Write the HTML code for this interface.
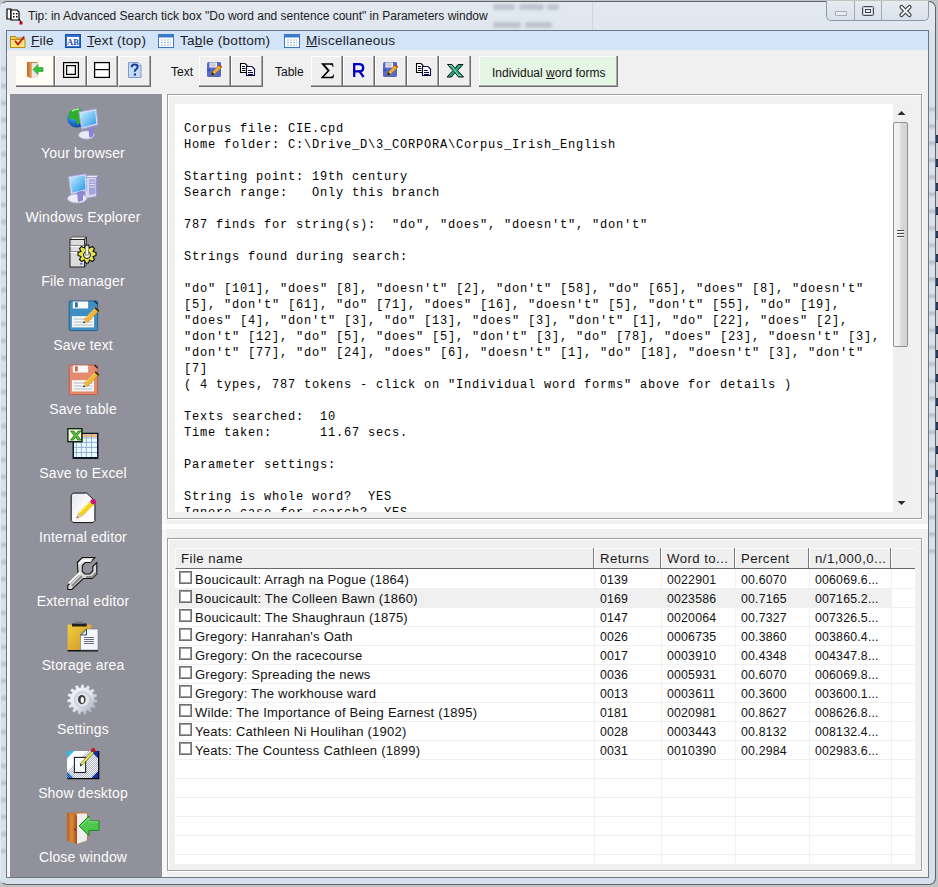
<!DOCTYPE html><html><head><meta charset="utf-8"><style>
*{margin:0;padding:0;box-sizing:border-box}
html,body{width:938px;height:887px;overflow:hidden}
body{position:relative;background:#c4c4c4;font-family:"Liberation Sans",sans-serif;font-size:12px;color:#000}
.a{position:absolute}
.frame{left:0;top:1px;width:936px;height:884px;border:1px solid #5d6570;border-left-color:#e4eaf2;border-radius:7px;
 background:linear-gradient(180deg,#e2e9f1 0px,#dfe6ee 29px,#d9e2ec 30px,#d8e1eb 100%)}
.client{left:6px;top:30px;width:923px;height:848px;border:1px solid #6f7780;background:#f0f0f0}
.menubar{left:7px;top:31px;width:921px;height:19px;background:#d3e4f9}
.mi{top:33px;font-size:13.6px;letter-spacing:0.25px;color:#1e1e1e;white-space:nowrap;line-height:16px}
.btn{top:56px;height:31px;background:#f0eeee;box-shadow:inset -1px -1px 0 #6b6b6b, inset -2px -2px 0 #a8a8a8, inset 1px 1px 0 #fff}
.tlab{top:64px;font-size:12px;color:#111;line-height:16px}
.side{left:10px;top:94px;width:152px;height:783px;background:#91919b}
.sl{left:9px;width:148px;text-align:center;color:#fcfcfc;font-size:14px;letter-spacing:0.15px;white-space:nowrap;line-height:16px}
.panel{border:1px solid #a0a0a0;box-shadow:inset 1px 1px 0 #fff, 1px 1px 0 #fff}
.txt{left:175px;top:104px;width:718px;height:408px;background:#fff;overflow:hidden}
.mono{font-family:"Liberation Mono",monospace;font-size:12px;letter-spacing:0.8px;line-height:16px;white-space:pre;color:#000;position:absolute;left:9px;top:17.4px}
.ht{top:550.5px;font-size:13.2px;letter-spacing:0.45px;color:#1a1a1a;white-space:nowrap;line-height:16px}
.cell{font-size:12.3px;letter-spacing:0.2px;white-space:nowrap;color:#111;line-height:16px}
svg{position:absolute;overflow:visible}
</style></head><body>
<div class="a frame"></div>
<div class="a" style="left:936px;top:120px;width:2px;height:375px;background:repeating-linear-gradient(180deg,#d6d2d4 0 15.9px,#1c2c40 15.9px 16.9px,#24405c 16.9px 22.9px,#101a28 22.9px 23.9px);background-position:0 -1px"></div>
<div class="a" style="left:929px;top:100px;width:6px;height:460px;background:repeating-linear-gradient(180deg,rgba(120,128,140,0) 0 6px,rgba(120,128,140,.35) 9px,rgba(120,128,140,0) 13px 17px)"></div>
<svg style="left:6px;top:8px" width="18" height="17" viewBox="0 0 18 17">
<path d="M1 1h4v10H1z" fill="#fff" stroke="#000" stroke-width="1.2"/>
<path d="M5 2h6l2 2v8H5z" fill="#fff" stroke="#000" stroke-width="1.2"/>
<rect x="7" y="5" width="1.5" height="1.5" fill="#000"/><rect x="10" y="5" width="1.5" height="1.5" fill="#000"/>
<rect x="7" y="8" width="1.5" height="1.5" fill="#000"/><rect x="10" y="8" width="1.5" height="1.5" fill="#000"/>
<path d="M13 11l2 3" stroke="#000" stroke-width="1.2"/><rect x="13.5" y="13.5" width="3" height="3" fill="#d00010"/>
</svg>
<div class="a" style="left:28px;top:9px;font-size:12px;color:#1b1b1b;white-space:nowrap;line-height:14px">Tip: in Advanced Search tick box "Do word and sentence count" in Parameters window</div>
<div class="a" style="left:493px;top:4px;width:22px;height:6px;background:#9aa2ac;filter:blur(1.8px);opacity:.5;border-radius:2px"></div>
<div class="a" style="left:519px;top:4px;width:25px;height:6px;background:#9aa2ac;filter:blur(1.8px);opacity:.5;border-radius:2px"></div>
<div class="a" style="left:547px;top:4px;width:12px;height:6px;background:#9aa2ac;filter:blur(1.8px);opacity:.5;border-radius:2px"></div>
<div class="a" style="left:493px;top:22px;width:28px;height:6px;background:#9aa2ac;filter:blur(1.8px);opacity:.5;border-radius:2px"></div>
<div class="a" style="left:525px;top:22px;width:27px;height:6px;background:#9aa2ac;filter:blur(1.8px);opacity:.5;border-radius:2px"></div>
<div class="a" style="left:592px;top:2px;width:1px;height:28px;background:#c4cad2;opacity:.6"></div>
<div class="a" style="left:826px;top:1px;width:103px;height:20px;border:1px solid #8f99a6;border-top:none;border-radius:0 0 5px 5px;background:linear-gradient(180deg,#e6ebf1,#d9e1ea)"></div>
<div class="a" style="left:854px;top:1px;width:1px;height:19px;background:#a2abb6"></div>
<div class="a" style="left:881px;top:1px;width:1px;height:19px;background:#a2abb6"></div>
<div class="a" style="left:835px;top:11px;width:12px;height:5px;border:1px solid #a6adb6;background:#e9edf2;border-radius:1px"></div>
<div class="a" style="left:862px;top:6px;width:12px;height:10px;border:1.5px solid #454a52;border-radius:1.5px;background:#eef1f5;box-shadow:inset 0 0 0 1px #c8ccd2"></div>
<div class="a" style="left:865px;top:9px;width:6px;height:4px;border:1px solid #3a3f46;background:#f4f6f8"></div>
<svg style="left:899px;top:5px" width="13" height="12" viewBox="0 0 13 12"><path d="M2.5 2L10.5 10M10.5 2L2.5 10" stroke="#3b4048" stroke-width="4.2" stroke-linecap="round"/><path d="M2.5 2L10.5 10M10.5 2L2.5 10" stroke="#f6f7f9" stroke-width="1.8" stroke-linecap="round"/></svg>
<div class="a" style="left:1px;top:60px;width:5px;height:800px;background:repeating-linear-gradient(180deg,rgba(120,128,140,0) 0 5px,rgba(120,128,140,.3) 9px,rgba(120,128,140,0) 13px 17px)"></div>
<div class="a client"></div>
<div class="a menubar"></div>
<svg style="left:10px;top:34px" width="16" height="14" viewBox="0 0 16 14">
<path d="M0.5 2.5h5l1 1.5h8v9.5h-14z" fill="#f2cc4a" stroke="#b88a1a"/>
<path d="M0.5 5.5h14.5v8h-14.5z" fill="#fbe27a" stroke="#b88a1a"/>
<path d="M5 6.8l3 3.8 6.2-8" fill="none" stroke="#c0161a" stroke-width="1.7"/>
</svg>
<div class="a mi" style="left:31px"><u>F</u>ile</div>
<svg style="left:65px;top:34px" width="16" height="14" viewBox="0 0 16 14">
<rect x="0.5" y="0.5" width="15" height="13" fill="#2f6fd0" stroke="#1b4fa8"/>
<rect x="2" y="3" width="12" height="9" fill="#fff"/>
<text x="8" y="11" font-family="Liberation Serif" font-weight="bold" font-size="8.5" text-anchor="middle" fill="#1b4fa8">AB</text>
</svg>
<div class="a mi" style="left:87px"><u>T</u>ext (top)</div>
<svg style="left:158px;top:34px" width="16" height="14" viewBox="0 0 16 14">
<rect x="0.5" y="0.5" width="15" height="13" fill="#fff" stroke="#3b78c8"/>
<rect x="0.5" y="0.5" width="15" height="3" fill="#3b78c8"/>
<path d="M3 6h10M3 8.5h10M3 11h10" stroke="#9bb7dd" stroke-dasharray="2 1"/>
</svg>
<div class="a mi" style="left:180px">Ta<u>b</u>le (bottom)</div>
<svg style="left:284px;top:34px" width="16" height="14" viewBox="0 0 16 14">
<rect x="0.5" y="0.5" width="15" height="13" fill="#fff" stroke="#3b78c8"/>
<rect x="0.5" y="0.5" width="15" height="3" fill="#3b78c8"/>
<path d="M3 6h10M3 8.5h10M3 11h10" stroke="#9bb7dd" stroke-dasharray="2 1"/>
</svg>
<div class="a mi" style="left:306px"><u>M</u>iscellaneous</div>
<div class="a btn" style="left:16px;width:39px;background:#fffdf5"></div>
<svg style="left:27px;top:62px" width="17" height="16" viewBox="0 0 17 16">
<defs><linearGradient id="ds" x1="0" x2="1"><stop offset="0" stop-color="#c0641e"/><stop offset="1" stop-color="#e8a060"/></linearGradient></defs>
<path d="M0 0h10.5v14.5L4 16 0 14.5z" fill="#d08040"/>
<path d="M4.5 1h6v13.5l-6 1.5z" fill="#e8e8e8"/>
<path d="M0 0l4.5 1v15L0 14.5z" fill="url(#ds)"/>
<path d="M6 7.5l5-5v3h5v4h-5v3z" fill="#3cc040" stroke="#1d9a22" stroke-width=".6"/>
</svg>
<div class="a btn" style="left:55px;width:32px;background:#f0eeee"></div>
<svg style="left:62px;top:62px" width="17" height="17" viewBox="0 0 17 17">
<rect x="1.6" y="0.6" width="14.8" height="14.8" fill="#fff" stroke="#000" stroke-width="1.25"/>
<rect x="4.6" y="3.6" width="8.8" height="8.8" fill="#fafafa" stroke="#000" stroke-width="1.25"/>
</svg>
<div class="a btn" style="left:87px;width:31px;background:#f0eeee"></div>
<svg style="left:93px;top:62px" width="17" height="17" viewBox="0 0 17 17">
<rect x="1.6" y="0.6" width="14.8" height="14.8" fill="#fff" stroke="#000" stroke-width="1.25"/>
<path d="M1.6 7.6h14.8" stroke="#000" stroke-width="1.2"/>
</svg>
<div class="a btn" style="left:119px;width:32px;background:#f0eeee"></div>
<svg style="left:128px;top:62px" width="14" height="16" viewBox="0 0 14 16">
<path d="M0.5 0.5h9.5l3 3v12h-12.5z" fill="#c4dcfa" stroke="#7d9ccc" stroke-width="1"/>
<path d="M10 0.5v3h3" fill="#e8f0fc" stroke="#7d9ccc" stroke-width=".8"/>
<path d="M3.6 5.2q0-2.6 3-2.6q3 0 3 2.4q0 1.4-1.6 2.3q-1.1.6-1.1 1.8v.6" fill="none" stroke="#1c3a9c" stroke-width="2"/>
<rect x="5.8" y="11.4" width="2.2" height="2.2" fill="#1c3a9c"/>
</svg>
<div class="a tlab" style="left:171px">Text</div>
<div class="a btn" style="left:199px;width:32px;background:#f0eeee"></div>
<svg style="left:207px;top:62px" width="16" height="16" viewBox="0 0 16 16">
<path d="M0 1.5q0-1.5 1.5-1.5h11.5l1 1v12.5q0 1.5-1.5 1.5h-11q-1.5 0-1.5-1.5z" fill="#5569c8"/>
<rect x="2.5" y="0.5" width="7.5" height="5" fill="#f2f2f6"/>
<path d="M3.5 2h5M3.5 3.8h5" stroke="#9aa0b0" stroke-width=".8"/>
<rect x="0" y="7.5" width="3" height="1" fill="#2a3a90"/>
<path d="M4 13.5l1.3-3.5 7-7 2.3 2.3-7 7z" fill="#f0b030" stroke="#a06a10" stroke-width=".6"/>
<path d="M4 13.5l1.3-3.5 2.2 2.2z" fill="#222"/>
<path d="M12.3 3l2.3 2.3" stroke="#b83020" stroke-width="1.6"/>
</svg>
<div class="a btn" style="left:231px;width:32px;background:#f0eeee"></div>
<svg style="left:240px;top:63px" width="17" height="14" viewBox="0 0 17 14">
<path d="M0.5 0.5h4.5l2 2v7h-6.5z" fill="#fff" stroke="#000" stroke-width="1.1"/>
<path d="M2 3.5h3M2 5.5h3.5M2 7.5h3.5" stroke="#000" stroke-width="1"/>
<path d="M6.5 3.5h5.5l2.5 2.5v6.5h-8z" fill="#fff" stroke="#0a0a50" stroke-width="1.1"/>
<path d="M8 7.5h3.5M8 9.5h5M8 11.5h5" stroke="#0a0a50" stroke-width="1"/>
</svg>
<div class="a tlab" style="left:275px">Table</div>
<div class="a btn" style="left:311px;width:32px;background:#f0eeee"></div>
<svg style="left:321px;top:63px" width="13" height="15" viewBox="0 0 13 15"><path d="M0.3 0.3h11.7l.6 3.6h-.6q-.8-2.1-2.6-2.1h-5.6l5 5.7-5.8 6.2h6.6q2 0 3-2.3h.6l-.9 3.9h-12.3v-.5l6.4-7-6.3-7.3z" fill="#000"/></svg>
<div class="a btn" style="left:343px;width:32px;background:#f0eeee"></div>
<svg style="left:353px;top:63px" width="12" height="15" viewBox="0 0 12 15"><path d="M1.2 14V1.2h5q4 0 4 3.7q0 3.3-3.6 3.6l4 5.5M1.2 8.3h5" fill="none" stroke="#0000c0" stroke-width="2.3"/></svg>
<div class="a btn" style="left:375px;width:32px;background:#f0eeee"></div>
<svg style="left:383px;top:62px" width="16" height="16" viewBox="0 0 16 16">
<path d="M0 1.5q0-1.5 1.5-1.5h11.5l1 1v12.5q0 1.5-1.5 1.5h-11q-1.5 0-1.5-1.5z" fill="#5569c8"/>
<rect x="2.5" y="0.5" width="7.5" height="5" fill="#f2f2f6"/>
<path d="M3.5 2h5M3.5 3.8h5" stroke="#9aa0b0" stroke-width=".8"/>
<rect x="0" y="7.5" width="3" height="1" fill="#2a3a90"/>
<path d="M4 13.5l1.3-3.5 7-7 2.3 2.3-7 7z" fill="#f0b030" stroke="#a06a10" stroke-width=".6"/>
<path d="M4 13.5l1.3-3.5 2.2 2.2z" fill="#222"/>
<path d="M12.3 3l2.3 2.3" stroke="#b83020" stroke-width="1.6"/>
</svg>
<div class="a btn" style="left:407px;width:32px;background:#f0eeee"></div>
<svg style="left:416px;top:63px" width="17" height="14" viewBox="0 0 17 14">
<path d="M0.5 0.5h4.5l2 2v7h-6.5z" fill="#fff" stroke="#000" stroke-width="1.1"/>
<path d="M2 3.5h3M2 5.5h3.5M2 7.5h3.5" stroke="#000" stroke-width="1"/>
<path d="M6.5 3.5h5.5l2.5 2.5v6.5h-8z" fill="#fff" stroke="#0a0a50" stroke-width="1.1"/>
<path d="M8 7.5h3.5M8 9.5h5M8 11.5h5" stroke="#0a0a50" stroke-width="1"/>
</svg>
<div class="a btn" style="left:439px;width:32px;background:#f0eeee"></div>
<svg style="left:447px;top:64px" width="17" height="14" viewBox="0 0 17 14">
<path d="M0.5 0.5h4.5l3 4 3-4h5l-5.5 6 6 6.5h-5l-3.5-4.5-3.5 4.5h-4.5l6-6.5z" fill="#26a884" stroke="#061a10" stroke-width="1"/>
<path d="M2 1.5h2.5l7 10h2.5" stroke="#7ee0c0" stroke-width="1" fill="none"/>
</svg>
<div class="a btn" style="left:479px;width:139px;background:#e6f6e4"></div>
<div class="a" style="left:492px;top:65px;font-size:12px;color:#111;white-space:nowrap;line-height:16px">Individual <u>w</u>ord forms</div>
<div class="a" style="left:7px;top:94px;width:160px;height:783px;background:#f7f7f7"></div>
<div class="a side"></div>
<div class="a sl" style="top:145px">Your browser</div>
<div class="a sl" style="top:209px">Windows Explorer</div>
<div class="a sl" style="top:273px">File manager</div>
<div class="a sl" style="top:337px">Save text</div>
<div class="a sl" style="top:401px">Save table</div>
<div class="a sl" style="top:465px">Save to Excel</div>
<div class="a sl" style="top:529px">Internal editor</div>
<div class="a sl" style="top:593px">External editor</div>
<div class="a sl" style="top:657px">Storage area</div>
<div class="a sl" style="top:721px">Settings</div>
<div class="a sl" style="top:785px">Show desktop</div>
<div class="a sl" style="top:849px">Close window</div>
<svg style="left:66px;top:107px" width="32" height="32" viewBox="0 0 32 32"><defs><radialGradient id="gl" cx=".35" cy=".3" r=".85"><stop offset="0" stop-color="#7fd0ff"/><stop offset=".5" stop-color="#1f78d8"/><stop offset="1" stop-color="#0a2a8a"/></radialGradient>
<linearGradient id="scr" x1="0" y1="0" x2="1" y2="1"><stop offset="0" stop-color="#c9f1ff"/><stop offset="1" stop-color="#2a9ae8"/></linearGradient></defs>
<circle cx="10.8" cy="11" r="9.6" fill="url(#gl)"/>
<path d="M3.5 4.5q5-4.5 11.5-2.5l1.5 6-2 6.5-3 4-1.5-5-4-2-3 1q-1-4 .5-8z" fill="#2fae2a"/>
<path d="M6 4q4-2.5 7-1.5" stroke="#a8f08a" stroke-width="1.5" fill="none"/>
<path d="M12.8 4.8L30.5 1.8L31.9 17.8L15.8 22.3z" fill="#dcdcf4" stroke="#a2a4da" stroke-width="1"/>
<path d="M14.4 6.3L29.2 3.7L30.2 16.4L16.7 20.4z" fill="url(#scr)"/>
<ellipse cx="20.5" cy="28" rx="7.8" ry="4" fill="#eceaf6" stroke="#c4c2e6" stroke-width=".8"/>
<path d="M22.5 20.6l5-1.4v10.3l-4.2 1.2z" fill="#8c84d6"/>
</svg>
<svg style="left:66px;top:171px" width="32" height="32" viewBox="0 0 32 32"><defs><linearGradient id="scr2" x1="0" y1="0" x2="1" y2="1"><stop offset="0" stop-color="#c6f0ff"/><stop offset="1" stop-color="#1f95e6"/></linearGradient></defs>
<path d="M19 6.5l3-2h10l-1.5 2z" fill="#f4f4fc" stroke="#a0a0d0" stroke-width=".6"/>
<path d="M19 6.5h11.5v19l-11.5 2z" fill="#d6d6f0" stroke="#9c9cd0" stroke-width=".8"/>
<path d="M30.5 6.5l1.5-2v19l-1.5 2z" fill="#8e8ec6"/>
<path d="M23 8.5h6.5v14.5l-6.5 1z" fill="#a4a4d8"/>
<path d="M23.5 11h5.5M23.5 13.5h5.5M23.5 16h5.5" stroke="#e4e4f6" stroke-width=".9"/>
<path d="M2.5 5.5L20 3L20.8 19.5L5 23.5z" fill="#dcdcf5" stroke="#a8a8da" stroke-width=".8"/>
<path d="M4 6.8L18.7 4.6L19.4 18.3L6.2 21.7z" fill="url(#scr2)"/>
<ellipse cx="11" cy="27.5" rx="9.5" ry="4.5" fill="#ecebf6" stroke="#b5b3dd" stroke-width=".8"/>
<path d="M11 21l6-1.5v10l-5 1.5z" fill="#8f86d8"/></svg>
<svg style="left:66px;top:235px" width="32" height="32" viewBox="0 0 32 32"><path d="M4 4.5l2-2.5h14l-2 2.5z" fill="#f2f2f2" stroke="#444" stroke-width=".8"/>
<rect x="4" y="4.5" width="14.5" height="27.5" fill="#dcdcdc" stroke="#222" stroke-width="1"/>
<path d="M18.5 4.5l2-2.5v27.5l-2 2.5z" fill="#9c9c9c" stroke="#222" stroke-width=".8"/>
<path d="M4.5 10.5h14M4.5 16.5h14" stroke="#8a8a8a" stroke-width="1"/>
<path d="M4.5 11.5h14M4.5 17.5h14" stroke="#fff" stroke-width="1"/>
<rect x="14" y="28" width="2.5" height="1.5" fill="#6a6ad0"/>
<g transform="translate(21 20)"><path d="M-1.5-10h3l1 3 3-1.5 2 2-1.5 3 3 1v3l-3 1 1.5 3-2 2-3-1.5-1 3h-3l-1-3-3 1.5-2-2 1.5-3-3-1v-3l3-1-1.5-3 2-2 3 1.5z" fill="#e6e44a" stroke="#111" stroke-width="1.1"/>
<circle r="3.5" fill="#f4f4e0" stroke="#111" stroke-width="1"/></g>
<rect x="19.5" y="11" width="3" height="9" fill="#f2f2f2" stroke="#555" stroke-width=".6"/></svg>
<svg style="left:66px;top:299px" width="32" height="32" viewBox="0 0 32 32"><rect x="3.2" y="2" width="28.4" height="29.6" rx="1" fill="#3f8fc2" stroke="#24608e" stroke-width="1"/>
<rect x="6.8" y="2.5" width="15.3" height="7" fill="#f7f8fb"/>
<rect x="9" y="3.3" width="2.8" height="5" fill="#2f6f9a"/>
<rect x="5.9" y="17.2" width="22.1" height="11.2" fill="#fafafa"/>
<path d="M7.5 20h19M7.5 23h19M7.5 26h19" stroke="#9aa6b4" stroke-width=".8"/>
<path d="M28.5 2l3 3" stroke="#1a2a3a" stroke-width="1.6"/>
<path d="M18.1 20.3L29.4 8.9L32.6 12.1L21.2 23.5z" fill="#f2b634" stroke="#b07a10" stroke-width=".6"/>
<path d="M19.5 19.2L30.6 8" stroke="#f8dc8a" stroke-width="1"/>
<path d="M17.3 24.2L18.1 20.3L21.2 23.5z" fill="#f0d8a8"/>
<path d="M17.3 24.2L17.8 22L19.5 23.7z" fill="#111"/>
<path d="M29.2 8.7L32.8 12.3" stroke="#3a2a10" stroke-width="1.8"/></svg>
<svg style="left:66px;top:363px" width="32" height="32" viewBox="0 0 32 32"><rect x="3.2" y="2" width="28.4" height="29.6" rx="1" fill="#e58a6e" stroke="#b86248" stroke-width="1"/>
<rect x="6.8" y="2.5" width="15.3" height="7" fill="#f7f8fb"/>
<rect x="9" y="3.3" width="2.8" height="5" fill="#c46a50"/>
<rect x="5.9" y="17.2" width="22.1" height="11.2" fill="#fafafa"/>
<path d="M7.5 20h19M7.5 23h19M7.5 26h19" stroke="#9aa6b4" stroke-width=".8"/>
<path d="M28.5 2l3 3" stroke="#1a2a3a" stroke-width="1.6"/>
<path d="M18.1 20.3L29.4 8.9L32.6 12.1L21.2 23.5z" fill="#f2b634" stroke="#b07a10" stroke-width=".6"/>
<path d="M19.5 19.2L30.6 8" stroke="#f8dc8a" stroke-width="1"/>
<path d="M17.3 24.2L18.1 20.3L21.2 23.5z" fill="#f0d8a8"/>
<path d="M17.3 24.2L17.8 22L19.5 23.7z" fill="#111"/>
<path d="M29.2 8.7L32.8 12.3" stroke="#3a2a10" stroke-width="1.8"/></svg>
<svg style="left:66px;top:427px" width="32" height="32" viewBox="0 0 32 32"><rect x="6.5" y="5.7" width="26" height="26.3" fill="#0a1628"/>
<rect x="8" y="7" width="23" height="23" fill="#e6fbff"/>
<rect x="8" y="7" width="23" height="3" fill="#f0b87a"/>
<path d="M10.4 7v23M15.4 7v23M20.4 7v23M25.5 7v23M8 10.9h23M8 15.4h23M8 20.4h23M8 25.5h23" stroke="#8eaac4" stroke-width=".9"/>
<rect x="1.2" y="1" width="15.5" height="14.4" fill="#0b2a10"/>
<rect x="2.6" y="2.4" width="12.5" height="11.5" fill="#fbffe8"/>
<path d="M4.5 4h3.5l2 3 2-3h3l-3.5 4.5 3.5 4.5h-3.5l-2-3-2 3h-3l3.5-4.5z" fill="#5cbc3c" stroke="#1f6a16" stroke-width=".7"/></svg>
<svg style="left:66px;top:491px" width="32" height="32" viewBox="0 0 32 32"><defs><linearGradient id="pg" x1="0" y1="0" x2="1" y2="1"><stop offset="0" stop-color="#e4e6f0"/><stop offset=".5" stop-color="#fafafe"/><stop offset="1" stop-color="#ffffff"/></linearGradient></defs>
<path d="M5.2 4.1l2-2h13.6l8.1 8v19.5l-2 2H7.2l-2-2z" fill="url(#pg)" stroke="#111" stroke-width="1"/>
<path d="M10.5 27.3l2.2-5.6 12.6-12.6 3.4 3.4-12.6 12.6z" fill="#f4d21a" stroke="#d0a800" stroke-width=".5"/>
<path d="M12.9 21.9l12.4-12.4" stroke="#fff08a" stroke-width="1.2"/>
<path d="M10.5 27.3l2.2-5.6 3.4 3.4z" fill="#d8c8a4"/>
<path d="M10.5 27.3l.8-2.1 1.3 1.3z" fill="#555"/>
<circle cx="27.2" cy="10.6" r="2.6" fill="#d0107a"/></svg>
<svg style="left:66px;top:555px" width="32" height="32" viewBox="0 0 32 32"><path d="M11.3 7.5l5-5h12.5l-4.5 5h-5l-3 3v6l2.5 2.5h5l3-3v-4.5l4-4v11.5l-4.5 4.5h-9l-11.5 11h-4v-4l10.5-10.5z" fill="#d8d8d8" stroke="#111" stroke-width="1.1" stroke-linejoin="miter"/>
<path d="M13 9l3.5-3.5h9M14 17.5l-11 11" stroke="#fff" stroke-width="2" fill="none"/>
<path d="M6 31l10-10M20 22h6l4-4" stroke="#8a8a8a" stroke-width="2" fill="none"/></svg>
<svg style="left:66px;top:619px" width="32" height="32" viewBox="0 0 32 32"><defs><linearGradient id="cb" x1="0" y1="0" x2="1" y2="1"><stop offset="0" stop-color="#f2cf3a"/><stop offset="1" stop-color="#c8902a"/></linearGradient></defs>
<rect x="1.6" y="5.7" width="23.7" height="26.3" fill="url(#cb)"/>
<rect x="1.6" y="31" width="30.4" height="1.5" fill="#111"/>
<rect x="6" y="4.5" width="14.7" height="3" fill="#222"/>
<rect x="9" y="2.5" width="8" height="2" fill="#777"/>
<path d="M20.5 10H32V31H14.5V16z" fill="#f3f7fb" stroke="#6d7a88" stroke-width=".6"/>
<path d="M14.5 16h6v-6z" fill="#d4e0ec" stroke="#3a4a5a" stroke-width="1"/>
<path d="M18 18.5h10M18 20.5h10M18 22.5h10M18 24.5h10" stroke="#6d7380" stroke-width="1"/></svg>
<svg style="left:66px;top:683px" width="32" height="32" viewBox="0 0 32 32"><defs><linearGradient id="gr" x1="0" y1="0" x2="1" y2="1"><stop offset="0" stop-color="#fbfbff"/><stop offset=".55" stop-color="#e0e2ec"/><stop offset="1" stop-color="#8e96a4"/></linearGradient>
<radialGradient id="gr2" cx=".5" cy=".5" r=".5"><stop offset="0" stop-color="#f4f4f8"/><stop offset="1" stop-color="#d8dae2"/></radialGradient></defs>
<polygon points="28.70,16.34 31.60,16.92 31.24,19.91 28.28,19.78 27.73,21.41 30.14,23.11 28.60,25.70 25.95,24.38 24.79,25.64 26.30,28.18 23.84,29.91 21.95,27.64 20.38,28.31 20.72,31.25 17.77,31.83 16.97,28.98 15.26,28.96 14.38,31.78 11.45,31.11 11.88,28.19 10.33,27.47 8.37,29.69 5.97,27.88 7.55,25.39 6.42,24.10 3.74,25.33 2.27,22.71 4.73,21.07 4.23,19.43 1.27,19.47 1.00,16.47 3.92,15.98 4.12,14.28 1.40,13.11 2.38,10.26 5.24,10.99 6.12,9.52 4.11,7.35 6.16,5.14 8.48,6.98 9.88,5.99 8.93,3.19 11.69,2.01 13.07,4.63 14.75,4.30 15.02,1.35 18.03,1.40 18.21,4.35 19.88,4.73 21.33,2.15 24.06,3.41 23.03,6.19 24.40,7.21 26.77,5.45 28.75,7.71 26.69,9.82 27.52,11.32 30.40,10.67 31.29,13.54 28.54,14.63" fill="url(#gr)" stroke="#8a909c" stroke-width=".5"/>
<circle cx="16.3" cy="16.6" r="7.8" fill="url(#gr2)" stroke="#b8bcc6" stroke-width=".8"/>
<ellipse cx="15.8" cy="16.6" rx="3.8" ry="4.6" fill="#3c3c40"/>
<ellipse cx="16.3" cy="16.900000000000002" rx="1.7" ry="3" fill="#fafafa"/></svg>
<svg style="left:66px;top:747px" width="32" height="32" viewBox="0 0 32 32"><defs><pattern id="chk" width="2" height="2" patternUnits="userSpaceOnUse"><rect width="2" height="2" fill="#fff"/><rect width="1" height="1" fill="#a8b0c8"/><rect x="1" y="1" width="1" height="1" fill="#a8b0c8"/></pattern>
<pattern id="chkb" width="2" height="2" patternUnits="userSpaceOnUse"><rect width="2" height="2" fill="#1838b0"/><rect width="1" height="1" fill="#40a8e0"/><rect x="1" y="1" width="1" height="1" fill="#40a8e0"/></pattern></defs>
<rect x="1.2" y="4.1" width="31.5" height="27.5" fill="url(#chkb)"/>
<path d="M1.2 4.1h7l-7 7z" fill="#30c0e0"/>
<path d="M32.7 4.1v8l-8-8z" fill="#1030a8"/>
<path d="M32.7 31.6v-8l-8 8z" fill="#1030a8"/>
<path d="M8.2 4.1h16.5l8 8v11.5l-8 8H8.2l-7-7v-12.5z" fill="url(#chk)"/>
<path d="M8.2 4.1h13l-20 20v-13z" fill="#fff"/>
<path d="M1.5 31.6L32.7 31.6L32.7 4.1" stroke="#000" stroke-width="1.2" fill="none"/>
<rect x="8.4" y="10.4" width="11.2" height="15.1" fill="#f6f9fc" stroke="#222" stroke-width="1.1"/>
<path d="M14.3 16.6l11.8-12.4 1.8 1.6-11.8 12.4z" fill="#eaea58" stroke="#505010" stroke-width=".6"/>
<path d="M14.3 16.6l-.3 3 2.1-1.4z" fill="#111"/>
<circle cx="27.3" cy="3.2" r="2.1" fill="#c01818"/></svg>
<svg style="left:66px;top:811px" width="32" height="32" viewBox="0 0 32 32"><defs><linearGradient id="dr" x1="0" x2="1"><stop offset="0" stop-color="#b8601f"/><stop offset=".5" stop-color="#e08a3a"/><stop offset="1" stop-color="#9a4a18"/></linearGradient></defs>
<path d="M1 1.6h20.7v28L10.9 33 1 29.5z" fill="#c9763a"/>
<path d="M10.9 2.5h10v27l-10 3.5z" fill="#eceef0"/>
<path d="M1 1.6L10.9 5v28L1 29.5z" fill="url(#dr)"/>
<circle cx="9" cy="18.5" r=".8" fill="#402008"/>
<path d="M13.1 14.9l9.9-9.9v5h10v9.4h-10v5.4z" fill="#4cc84c" stroke="#138a13" stroke-width="1"/>
<path d="M15 14.9l8-8v4h9" stroke="#8ee08e" stroke-width="1" fill="none"/></svg>
<div class="a panel" style="left:167px;top:94px;width:755px;height:425px"></div>
<div class="a txt"><div class="mono">Corpus file: CIE.cpd
Home folder: C:\Drive_D\3_CORPORA\Corpus_Irish_English

Starting point: 19th century
Search range:   Only this branch

787 finds for string(s):  &quot;do&quot;, &quot;does&quot;, &quot;doesn&#x27;t&quot;, &quot;don&#x27;t&quot;

Strings found during search:

&quot;do&quot; [101], &quot;does&quot; [8], &quot;doesn&#x27;t&quot; [2], &quot;don&#x27;t&quot; [58], &quot;do&quot; [65], &quot;does&quot; [8], &quot;doesn&#x27;t&quot;
[5], &quot;don&#x27;t&quot; [61], &quot;do&quot; [71], &quot;does&quot; [16], &quot;doesn&#x27;t&quot; [5], &quot;don&#x27;t&quot; [55], &quot;do&quot; [19],
&quot;does&quot; [4], &quot;don&#x27;t&quot; [3], &quot;do&quot; [13], &quot;does&quot; [3], &quot;don&#x27;t&quot; [1], &quot;do&quot; [22], &quot;does&quot; [2],
&quot;don&#x27;t&quot; [12], &quot;do&quot; [5], &quot;does&quot; [5], &quot;don&#x27;t&quot; [3], &quot;do&quot; [78], &quot;does&quot; [23], &quot;doesn&#x27;t&quot; [3],
&quot;don&#x27;t&quot; [77], &quot;do&quot; [24], &quot;does&quot; [6], &quot;doesn&#x27;t&quot; [1], &quot;do&quot; [18], &quot;doesn&#x27;t&quot; [3], &quot;don&#x27;t&quot;
[7]
( 4 types, 787 tokens - click on &quot;Individual word forms&quot; above for details )

Texts searched:  10
Time taken:      11.67 secs.

Parameter settings:

String is whole word?  YES
Ignore case for search?  YES
</div></div>
<div class="a" style="left:893px;top:104px;width:16px;height:408px;background:#efefef"></div>
<svg style="left:897px;top:110px" width="9" height="6" viewBox="0 0 9 6"><path d="M0.5 5L4.5 1L8.5 5z" fill="#2b2b2b"/></svg>
<div class="a" style="left:893px;top:122px;width:15px;height:225px;border:1px solid #919191;border-radius:2px;background:linear-gradient(90deg,#f3f3f3 0,#ececec 45%,#d9d9dd 55%,#d3d3d8 100%)"></div>
<div class="a" style="left:897px;top:230px;width:7px;height:1px;background:#4a4a4a;box-shadow:0 1px 0 #fafafa"></div>
<div class="a" style="left:897px;top:233px;width:7px;height:1px;background:#4a4a4a;box-shadow:0 1px 0 #fafafa"></div>
<div class="a" style="left:897px;top:236px;width:7px;height:1px;background:#4a4a4a;box-shadow:0 1px 0 #fafafa"></div>
<svg style="left:897px;top:500px" width="9" height="6" viewBox="0 0 9 6"><path d="M0.5 1L4.5 5L8.5 1z" fill="#2b2b2b"/></svg>
<div class="a" style="left:162px;top:524px;width:766px;height:5px;background:#fdfdfd"></div>
<div class="a panel" style="left:167px;top:538px;width:755px;height:333px"></div>
<div class="a" style="left:175px;top:548px;width:740px;height:316px;background:#fff"></div>
<div class="a" style="left:175px;top:548px;width:740px;height:21px;background:#efefef;border-top:1px solid #fafafa;border-left:1px solid #fafafa;border-bottom:1px solid #6b6b6b"></div>
<div class="a" style="left:593px;top:548px;width:1px;height:20px;background:#7a7a7a"></div><div class="a" style="left:594px;top:548px;width:1px;height:19px;background:#fff"></div>
<div class="a" style="left:660px;top:548px;width:1px;height:20px;background:#7a7a7a"></div><div class="a" style="left:661px;top:548px;width:1px;height:19px;background:#fff"></div>
<div class="a" style="left:734px;top:548px;width:1px;height:20px;background:#7a7a7a"></div><div class="a" style="left:735px;top:548px;width:1px;height:19px;background:#fff"></div>
<div class="a" style="left:808px;top:548px;width:1px;height:20px;background:#7a7a7a"></div><div class="a" style="left:809px;top:548px;width:1px;height:19px;background:#fff"></div>
<div class="a" style="left:890px;top:548px;width:1px;height:20px;background:#7a7a7a"></div><div class="a" style="left:891px;top:548px;width:1px;height:19px;background:#fff"></div>
<div class="a ht" style="left:181px">File name</div>
<div class="a ht" style="left:600px">Returns</div>
<div class="a ht" style="left:667px">Word to...</div>
<div class="a ht" style="left:741px">Percent</div>
<div class="a ht" style="left:815px">n/1,000,0...</div>
<div class="a" style="left:175px;top:588px;width:716px;height:19px;background:#f0f0f0"></div>
<div class="a" style="left:175px;top:588px;width:740px;height:1px;background:#f0f0f0"></div>
<div class="a" style="left:175px;top:607px;width:740px;height:1px;background:#f0f0f0"></div>
<div class="a" style="left:175px;top:626px;width:740px;height:1px;background:#f0f0f0"></div>
<div class="a" style="left:175px;top:645px;width:740px;height:1px;background:#f0f0f0"></div>
<div class="a" style="left:175px;top:664px;width:740px;height:1px;background:#f0f0f0"></div>
<div class="a" style="left:175px;top:683px;width:740px;height:1px;background:#f0f0f0"></div>
<div class="a" style="left:175px;top:702px;width:740px;height:1px;background:#f0f0f0"></div>
<div class="a" style="left:175px;top:721px;width:740px;height:1px;background:#f0f0f0"></div>
<div class="a" style="left:175px;top:740px;width:740px;height:1px;background:#f0f0f0"></div>
<div class="a" style="left:175px;top:759px;width:740px;height:1px;background:#f0f0f0"></div>
<div class="a" style="left:175px;top:778px;width:740px;height:1px;background:#f0f0f0"></div>
<div class="a" style="left:175px;top:797px;width:740px;height:1px;background:#f0f0f0"></div>
<div class="a" style="left:175px;top:816px;width:740px;height:1px;background:#f0f0f0"></div>
<div class="a" style="left:175px;top:835px;width:740px;height:1px;background:#f0f0f0"></div>
<div class="a" style="left:175px;top:854px;width:740px;height:1px;background:#f0f0f0"></div>
<div class="a" style="left:594px;top:569px;width:1px;height:295px;background:#f0f0f0"></div>
<div class="a" style="left:661px;top:569px;width:1px;height:295px;background:#f0f0f0"></div>
<div class="a" style="left:735px;top:569px;width:1px;height:295px;background:#f0f0f0"></div>
<div class="a" style="left:809px;top:569px;width:1px;height:295px;background:#f0f0f0"></div>
<div class="a" style="left:891px;top:569px;width:1px;height:295px;background:#f0f0f0"></div>
<div class="a" style="left:179px;top:571px;width:13px;height:13px;border:1px solid #707070;box-shadow:inset 0 0 0 1px #9c9c9c;background:#fff"></div>
<div class="a cell" style="left:195px;top:572px;font-size:13px;letter-spacing:0.24px">Boucicault: Arragh na Pogue (1864)</div>
<div class="a cell" style="left:600px;top:572px">0139</div>
<div class="a cell" style="left:667px;top:572px">0022901</div>
<div class="a cell" style="left:741px;top:572px">00.6070</div>
<div class="a cell" style="left:815px;top:572px">006069.6...</div>
<div class="a" style="left:179px;top:590px;width:13px;height:13px;border:1px solid #707070;box-shadow:inset 0 0 0 1px #9c9c9c;background:#fff"></div>
<div class="a cell" style="left:195px;top:591px;font-size:13px;letter-spacing:0.24px">Boucicault: The Colleen Bawn (1860)</div>
<div class="a cell" style="left:600px;top:591px">0169</div>
<div class="a cell" style="left:667px;top:591px">0023586</div>
<div class="a cell" style="left:741px;top:591px">00.7165</div>
<div class="a cell" style="left:815px;top:591px">007165.2...</div>
<div class="a" style="left:179px;top:609px;width:13px;height:13px;border:1px solid #707070;box-shadow:inset 0 0 0 1px #9c9c9c;background:#fff"></div>
<div class="a cell" style="left:195px;top:610px;font-size:13px;letter-spacing:0.24px">Boucicault: The Shaughraun (1875)</div>
<div class="a cell" style="left:600px;top:610px">0147</div>
<div class="a cell" style="left:667px;top:610px">0020064</div>
<div class="a cell" style="left:741px;top:610px">00.7327</div>
<div class="a cell" style="left:815px;top:610px">007326.5...</div>
<div class="a" style="left:179px;top:628px;width:13px;height:13px;border:1px solid #707070;box-shadow:inset 0 0 0 1px #9c9c9c;background:#fff"></div>
<div class="a cell" style="left:195px;top:629px;font-size:13px;letter-spacing:0.24px">Gregory: Hanrahan's Oath</div>
<div class="a cell" style="left:600px;top:629px">0026</div>
<div class="a cell" style="left:667px;top:629px">0006735</div>
<div class="a cell" style="left:741px;top:629px">00.3860</div>
<div class="a cell" style="left:815px;top:629px">003860.4...</div>
<div class="a" style="left:179px;top:647px;width:13px;height:13px;border:1px solid #707070;box-shadow:inset 0 0 0 1px #9c9c9c;background:#fff"></div>
<div class="a cell" style="left:195px;top:648px;font-size:13px;letter-spacing:0.24px">Gregory: On the racecourse</div>
<div class="a cell" style="left:600px;top:648px">0017</div>
<div class="a cell" style="left:667px;top:648px">0003910</div>
<div class="a cell" style="left:741px;top:648px">00.4348</div>
<div class="a cell" style="left:815px;top:648px">004347.8...</div>
<div class="a" style="left:179px;top:666px;width:13px;height:13px;border:1px solid #707070;box-shadow:inset 0 0 0 1px #9c9c9c;background:#fff"></div>
<div class="a cell" style="left:195px;top:667px;font-size:13px;letter-spacing:0.24px">Gregory: Spreading the news</div>
<div class="a cell" style="left:600px;top:667px">0036</div>
<div class="a cell" style="left:667px;top:667px">0005931</div>
<div class="a cell" style="left:741px;top:667px">00.6070</div>
<div class="a cell" style="left:815px;top:667px">006069.8...</div>
<div class="a" style="left:179px;top:685px;width:13px;height:13px;border:1px solid #707070;box-shadow:inset 0 0 0 1px #9c9c9c;background:#fff"></div>
<div class="a cell" style="left:195px;top:686px;font-size:13px;letter-spacing:0.24px">Gregory: The workhouse ward</div>
<div class="a cell" style="left:600px;top:686px">0013</div>
<div class="a cell" style="left:667px;top:686px">0003611</div>
<div class="a cell" style="left:741px;top:686px">00.3600</div>
<div class="a cell" style="left:815px;top:686px">003600.1...</div>
<div class="a" style="left:179px;top:704px;width:13px;height:13px;border:1px solid #707070;box-shadow:inset 0 0 0 1px #9c9c9c;background:#fff"></div>
<div class="a cell" style="left:195px;top:705px;font-size:13px;letter-spacing:0.24px">Wilde: The Importance of Being Earnest (1895)</div>
<div class="a cell" style="left:600px;top:705px">0181</div>
<div class="a cell" style="left:667px;top:705px">0020981</div>
<div class="a cell" style="left:741px;top:705px">00.8627</div>
<div class="a cell" style="left:815px;top:705px">008626.8...</div>
<div class="a" style="left:179px;top:723px;width:13px;height:13px;border:1px solid #707070;box-shadow:inset 0 0 0 1px #9c9c9c;background:#fff"></div>
<div class="a cell" style="left:195px;top:724px;font-size:13px;letter-spacing:0.24px">Yeats: Cathleen Ni Houlihan (1902)</div>
<div class="a cell" style="left:600px;top:724px">0028</div>
<div class="a cell" style="left:667px;top:724px">0003443</div>
<div class="a cell" style="left:741px;top:724px">00.8132</div>
<div class="a cell" style="left:815px;top:724px">008132.4...</div>
<div class="a" style="left:179px;top:742px;width:13px;height:13px;border:1px solid #707070;box-shadow:inset 0 0 0 1px #9c9c9c;background:#fff"></div>
<div class="a cell" style="left:195px;top:743px;font-size:13px;letter-spacing:0.24px">Yeats: The Countess Cathleen (1899)</div>
<div class="a cell" style="left:600px;top:743px">0031</div>
<div class="a cell" style="left:667px;top:743px">0010390</div>
<div class="a cell" style="left:741px;top:743px">00.2984</div>
<div class="a cell" style="left:815px;top:743px">002983.6...</div>
</body></html>
